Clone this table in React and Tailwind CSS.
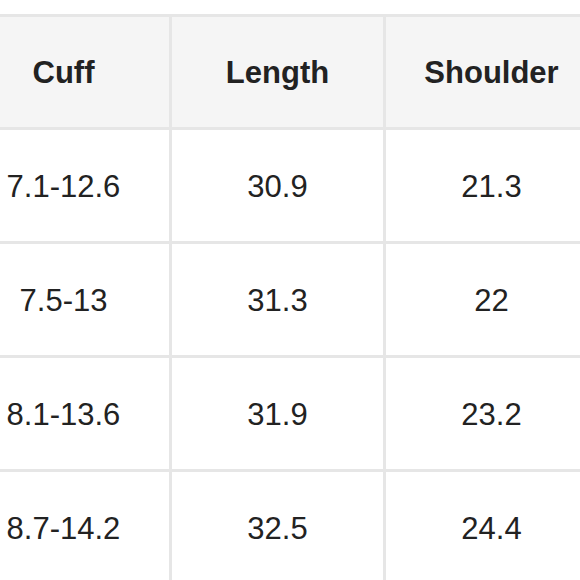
const headers = ["Cuff", "Length", "Shoulder"];
const rows = [
  ["7.1-12.6", "30.9", "21.3"],
  ["7.5-13", "31.3", "22"],
  ["8.1-13.6", "31.9", "23.2"],
  ["8.7-14.2", "32.5", "24.4"],
];

export default function App() {
  return (
    <div className="w-[580px] h-[580px] overflow-hidden bg-white" style={{ fontFamily: '"Liberation Sans", Arial, sans-serif' }}>
      <div className="mt-[14px] ml-[-45px] w-max grid grid-cols-[211px_211px_211px] gap-[3px] p-[3px] bg-[#e6e6e6] text-[#222] text-[31px]">
        {headers.map((h) => (
          <div key={h} className="h-[110px] pt-[3px] bg-[#f5f5f5] flex items-center justify-center font-bold">
            {h}
          </div>
        ))}
        {rows.map((r, i) =>
          r.map((c, j) => (
            <div key={i + "-" + j} className="h-[111px] pt-[3px] bg-white flex items-center justify-center">
              {c}
            </div>
          ))
        )}
      </div>
    </div>
  );
}
